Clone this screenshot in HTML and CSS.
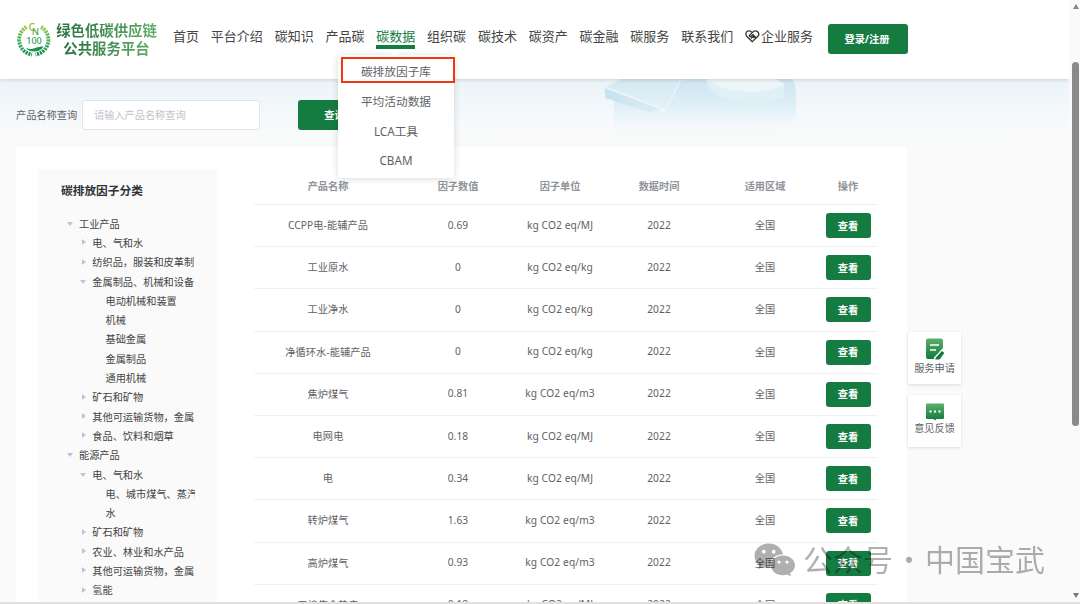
FILE: index.html
```html
<!DOCTYPE html>
<html lang="zh-CN">
<head>
  <meta charset="UTF-8">
  <meta name="viewport" content="width=device-width, initial-scale=1.0">
  <title>绿色低碳供应链公共服务平台</title>
  <link rel="stylesheet" href="styles.css">
</head>
<body>
<div class="window">
  <div class="page">
    <header>
      <svg class="logo" viewBox="0 0 35 36">
        <defs>
          <linearGradient id="leaf" x1="0" y1="0" x2="0" y2="1">
            <stop offset="0" stop-color="#9acb4b"/>
            <stop offset=".4" stop-color="#4db35c"/>
            <stop offset="1" stop-color="#179150"/>
          </linearGradient>
        </defs>
        <g fill="none" stroke="url(#leaf)">
          <path d="M10.500 6A14.800 14.800 0 0 0 16 33.500" stroke-width="3.800" stroke-dasharray="2.100 .9"/>
          <path d="M25 6A14.800 14.800 0 0 1 19.500 33.500" stroke-width="3.800" stroke-dasharray="2.100 .9"/>
        </g>
        <path d="M14.500 28c4 0 6-2.500 13-2.500-2 3.500-5 5-9 5-3.500 0-7-1-8.500-4 1.500 1 3 1.500 4.500 1.500z" fill="#199353"/>
        <text x="12.500" y="9.500" class="logo-c">C</text>
        <text x="15.800" y="13.800" class="logo-n">N</text>
        <text x="18" y="22.500" class="logo-num">100</text>
      </svg>
      <div class="brand"><span>绿色低碳供应链</span><span>公共服务平台</span></div>
      <nav>
        <a>首页</a>
        <a>平台介绍</a>
        <a>碳知识</a>
        <a>产品碳</a>
        <a class="active">碳数据</a>
        <a>组织碳</a>
        <a>碳技术</a>
        <a>碳资产</a>
        <a>碳金融</a>
        <a>碳服务</a>
        <a>联系我们</a>
        <a class="company"><svg viewBox="0 0 15 13"><path d="M7.300 11.700 1.700 6.200C.2 4.500.8 1.900 2.700 1.200 4.400.6 6 1 7.300 2.600 8.700 1 10.500.6 12 1.300c2 .9 2.400 3.400.9 5L7.300 11.700zM7.300 2.600 4.600 5.200c-.6.800.4 1.900 1.300 1.200L8 4.700l3 3M5.800 8.500l2.300-1.800 1.300 1.300"/></svg>企业服务</a>
      </nav>
      <button class="login">登录/注册</button>
      <div class="submenu">
        <a class="marked">碳排放因子库</a>
        <a>平均活动数据</a>
        <a>LCA工具</a>
        <a>CBAM</a>
      </div>
    </header>

    <section class="banner">
      <svg class="banner-art" viewBox="0 0 200 62">
        <defs>
          <linearGradient id="ice" x1="0" y1="0" x2="0" y2="1">
            <stop offset="0" stop-color="#cfe5f1"/>
            <stop offset=".45" stop-color="#deeef6"/>
            <stop offset=".8" stop-color="#f2f8fb"/>
            <stop offset="1" stop-color="#f8fafb" stop-opacity="0"/>
          </linearGradient>
          <linearGradient id="side" x1="0" y1="0" x2="1" y2="0">
            <stop offset="0" stop-color="#c6e1ef"/>
            <stop offset="1" stop-color="#deeef6"/>
          </linearGradient>
          <linearGradient id="plate" x1="0" y1="0" x2="0" y2="1">
            <stop offset="0" stop-color="#d3e8f3"/>
            <stop offset="1" stop-color="#e6f2f8"/>
          </linearGradient>
        </defs>
        <path d="M14 18 65 33 80 0H192q4 6 4 14V36Q190 50 165 56H14z" fill="url(#ice)"/>
        <path d="M5 8 22 0H81L66 31z" fill="url(#plate)"/>
        <path d="M5 8 66 31 81 0" fill="none" stroke="#f1f8fb"/>
        <path d="M5 9 62 30.500 50 33 5 19z" fill="url(#side)"/>
        <path d="M106 0v3c5 13 25 21 47 21 12 0 22-2 31-6V5l-8-5z" fill="#e0f0f7"/>
        <path d="M107 0c8 8 24 13 46 13 12 0 23-3 31-8l-8-5z" fill="#edf5f9"/>
      </svg>
      <label>产品名称查询</label>
      <input type="text" placeholder="请输入产品名称查询">
      <button class="search">查询</button>
    </section>

    <main>
      <aside>
        <h2>碳排放因子分类</h2>
        <ul class="tree">
          <li class="open">工业产品</li>
          <li class="l2 shut">电、气和水</li>
          <li class="l2 shut">纺织品，服装和皮革制</li>
          <li class="l2 open">金属制品、机械和设备</li>
          <li class="l3">电动机械和装置</li>
          <li class="l3">机械</li>
          <li class="l3">基础金属</li>
          <li class="l3">金属制品</li>
          <li class="l3">通用机械</li>
          <li class="l2 shut">矿石和矿物</li>
          <li class="l2 shut">其他可运输货物，金属</li>
          <li class="l2 shut">食品、饮料和烟草</li>
          <li class="open">能源产品</li>
          <li class="l2 open">电、气和水</li>
          <li class="l3">电、城市煤气、蒸汽</li>
          <li class="l3">水</li>
          <li class="l2 shut">矿石和矿物</li>
          <li class="l2 shut">农业、林业和水产品</li>
          <li class="l2 shut">其他可运输货物，金属</li>
          <li class="l2 shut">氢能</li>
        </ul>
      </aside>
      <table>
        <colgroup><col class="c1"><col class="c2"><col class="c3"><col class="c4"><col class="c5"><col class="c6"></colgroup>
        <thead>
          <tr><th>产品名称</th><th>因子数值</th><th>因子单位</th><th>数据时间</th><th>适用区域</th><th>操作</th></tr>
        </thead>
        <tbody>
          <tr><td>CCPP电-能辅产品</td><td>0.69</td><td>kg CO2 eq/MJ</td><td>2022</td><td>全国</td><td><button>查看</button></td></tr>
          <tr><td>工业原水</td><td>0</td><td>kg CO2 eq/kg</td><td>2022</td><td>全国</td><td><button>查看</button></td></tr>
          <tr><td>工业净水</td><td>0</td><td>kg CO2 eq/kg</td><td>2022</td><td>全国</td><td><button>查看</button></td></tr>
          <tr><td>净循环水-能辅产品</td><td>0</td><td>kg CO2 eq/kg</td><td>2022</td><td>全国</td><td><button>查看</button></td></tr>
          <tr><td>焦炉煤气</td><td>0.81</td><td>kg CO2 eq/m3</td><td>2022</td><td>全国</td><td><button>查看</button></td></tr>
          <tr><td>电网电</td><td>0.18</td><td>kg CO2 eq/MJ</td><td>2022</td><td>全国</td><td><button>查看</button></td></tr>
          <tr><td>电</td><td>0.34</td><td>kg CO2 eq/MJ</td><td>2022</td><td>全国</td><td><button>查看</button></td></tr>
          <tr><td>转炉煤气</td><td>1.63</td><td>kg CO2 eq/m3</td><td>2022</td><td>全国</td><td><button>查看</button></td></tr>
          <tr><td>高炉煤气</td><td>0.93</td><td>kg CO2 eq/m3</td><td>2022</td><td>全国</td><td><button>查看</button></td></tr>
          <tr><td>干熄焦余热电</td><td>0.18</td><td>kg CO2 eq/MJ</td><td>2022</td><td>全国</td><td><button>查看</button></td></tr>
        </tbody>
      </table>
    </main>

    <div class="float-tools">
      <div class="tool">
        <svg viewBox="0 0 20 22">
          <defs>
            <linearGradient id="green" x1="0" y1="0" x2="0" y2="1">
              <stop offset="0" stop-color="#5cb06a"/>
              <stop offset="1" stop-color="#107a3d"/>
            </linearGradient>
          </defs>
          <path d="M3 .5h13a2 2 0 0 1 2 2V10L9 21H3a2 2 0 0 1-2-2V2.500a2 2 0 0 1 2-2z" fill="url(#green)"/>
          <path d="M5 7h9M5 12h6" stroke="#fff" stroke-width="1.300"/>
          <path d="m10.500 19 6-6.500 2.800 2.500-4.800 6.500h-4z" fill="#107a3d"/>
          <path d="m9 20.500 9-9.500" stroke="#fff" stroke-width="1.200"/>
        </svg>
        <span>服务申请</span>
      </div>
      <div class="tool feedback">
        <svg viewBox="0 0 20 18">
          <path d="M2 .5h16a1 1 0 0 1 1 1V15a1 1 0 0 1-1 1h-6.500L10 17.500 8.500 16H2a1 1 0 0 1-1-1V1.500a1 1 0 0 1 1-1z" fill="url(#green)"/>
          <path d="M4.500 8.500h2M9 8.500h2M13.500 8.500h2" stroke="#fff" stroke-width="2"/>
        </svg>
        <span>意见反馈</span>
      </div>
    </div>
  </div>
  <div class="scrollbar"><i class="up"></i><i class="thumb"></i><i class="down"></i></div>
</div>

<div class="watermark">
  <svg viewBox="0 0 42 34">
    <path fill-rule="evenodd" d="M15 .5C7 .5.500 6 .500 12.700c0 4 2 7.100 5.200 9.300L4.300 26.200l5-2.500c2.300.7 4.700 1 7.200.9C14.500 17 21 11.200 29 11.600 27.800 5 22 .5 15 .5zM9.800 6.800a1.900 1.900 0 1 0 0 3.800 1.900 1.900 0 0 0 0-3.800zm9.900 0a1.900 1.900 0 1 0 0 3.800 1.900 1.900 0 0 0 0-3.800z"/>
    <path fill-rule="evenodd" d="M29 12.500c-6.800 0-12 4.400-12 9.900s5.200 9.800 12 9.800c1.500 0 2.900-.2 4.200-.7l3.900 2.100-1.100-3.500c3-1.900 5-4.500 5-7.700 0-5.500-5.200-9.900-12-9.900zm-4 5a1.600 1.600 0 1 0 0 3.200 1.600 1.600 0 0 0 0-3.200zm8 0a1.600 1.600 0 1 0 0 3.200 1.600 1.600 0 0 0 0-3.200z"/>
  </svg>
  <span>公众号</span><b>·</b><span>中国宝武</span>
</div>
</body>
</html>
```

FILE: styles.css
```css
* { box-sizing: border-box; }
body { margin: 0; height: 604px; overflow: hidden; position: relative; background: #fafafa; font-family: "Noto Sans", "Noto Sans CJK SC", sans-serif; font-size: 10.2px; color: #606266; }
button { border: none; border-radius: 3px; background: #157c41; color: #fff; font-family: inherit; font-weight: bold; font-size: 10.2px; padding: 0 0 1px; }

.window { display: flex; height: 604px; border-bottom: 2px solid #e0e0e0; overflow: hidden; }
.page { width: 1069px; height: 602px; overflow: hidden; position: relative; }

header { display: flex; align-items: flex-start; height: 79px; padding-left: 16px; background: #fff; position: relative; z-index: 2; box-shadow: 0 1px 4px rgba(0, 0, 0, 0.14); }
.logo { width: 35px; height: 36px; margin-top: 21px; overflow: visible; }
.logo text { font-family: "Noto Sans", sans-serif; font-weight: 500; }
.logo-c { font-size: 10.5px; fill: #8fc43f; }
.logo-n { font-size: 9.5px; fill: #4fae4a; }
.logo-num { font-size: 9px; fill: #2f9f55; text-anchor: middle; }
.brand { display: flex; flex-direction: column; align-items: center; width: 101px; margin: 21px 0 0 5px; font-family: "Noto Sans CJK SC", sans-serif; font-size: 14.4px; font-weight: bold; line-height: 18px; white-space: nowrap; }
.brand span { background: linear-gradient(90deg, #28713f, #5fab68); -webkit-background-clip: text; background-clip: text; color: transparent; }
nav { display: flex; gap: 11.8px; margin: 26px 0 0 16px; font-size: 13px; color: #444; white-space: nowrap; }
nav a { height: 23px; line-height: 20px; }
nav .active { color: #157c41; border-bottom: 4px solid #157c41; }
.company { display: flex; }
.company svg { width: 15px; height: 13px; margin: 4px 1px 0 0; fill: none; stroke: #333; stroke-width: 1.3; }
.login { width: 80px; height: 30px; margin: 24px 0 0 15px; padding-right: 2px; }

.submenu { position: absolute; left: 338px; top: 55px; width: 116px; height: 123px; padding-top: 2px; background: #fff; border-radius: 3px; box-shadow: 0 1px 7px rgba(0, 0, 0, 0.15); font-size: 11.7px; }
.submenu::before { content: ""; position: absolute; left: 53px; top: -4px; border: 4px solid transparent; border-top: none; border-bottom-color: #fff; }
.submenu a { display: block; height: 29.7px; line-height: 29px; text-align: center; }
.submenu .marked { width: 114px; height: 26px; margin: 0 0 3.900px 3px; line-height: 25px; padding-right: 4px; border: 2px solid #f53410; }

.banner { display: flex; align-items: flex-start; height: 68px; padding: 21px 0 0 16px; position: relative; background: linear-gradient(#ebf4f9, #f6f9fb 60%, #fafafa); }
.banner-art { position: absolute; left: 600px; top: 0; width: 200px; height: 62px; }
.banner label { width: 66px; line-height: 30px; white-space: nowrap; }
.banner input { width: 178px; height: 30px; padding: 0 11px; border: 1px solid #e1e5ea; border-radius: 3px; background: #fff; font-family: inherit; font-size: 10.2px; }
.banner input::placeholder { color: #bfc3cb; }
.search { width: 73px; height: 30px; margin-left: 38px; }

main { display: flex; align-items: flex-start; width: 891px; height: 500px; margin-left: 16px; padding: 22px 0 0 22px; background: #fff; }
aside { width: 179px; height: 478px; background: #fafafa; }
aside h2 { margin: 0; padding: 11px 0 0 23px; font-size: 11.7px; line-height: 20px; color: #303133; }
.tree { width: 157px; margin: 13.5px 0 0; padding: 0 0 0 29px; list-style: none; overflow: hidden; color: #444; }
.tree li { display: flex; align-items: center; height: 19.3px; padding-left: 12px; white-space: nowrap; position: relative; }
.tree .l2 { padding-left: 25.300px; }
.tree .l3 { padding-left: 38.500px; }
.tree li::before { position: absolute; margin-left: -12px; border: 3px solid transparent; }
.tree .open::before { content: ""; margin-top: 4px; border-top-color: #c0c4cc; border-top-width: 4px; }
.tree .shut::before { content: ""; margin-left: -10px; border-left-color: #c0c4cc; border-left-width: 4px; }

table { width: 624px; margin-left: 37px; table-layout: fixed; border-collapse: separate; border-spacing: 0; text-align: center; }
.c1 { width: 148px; }
.c2 { width: 112px; }
.c3 { width: 92px; }
.c4, .c5 { width: 106px; }
.c6 { width: 60px; }
th, td { padding: 0 0 2px; border-bottom: 1px solid #eff1f5; white-space: nowrap; }
th { height: 36px; color: #909399; }
td { height: 42.2px; letter-spacing: 0.1px; }
td:last-child { padding: 0; }
td button { width: 45px; height: 25px; display: block; margin: 0 auto; }

.float-tools { position: absolute; left: 908px; top: 332px; display: flex; flex-direction: column; gap: 11px; }
.tool { display: flex; flex-direction: column; align-items: center; width: 53px; height: 52px; padding-top: 6px; background: #fff; box-shadow: 0 1px 3px rgba(0, 0, 0, 0.13); line-height: 16px; }
.tool svg { width: 20px; height: 22px; }
.tool.feedback { padding-top: 8px; }
.feedback svg { height: 18px; }
.feedback span { margin-top: -1px; }

.scrollbar { display: flex; flex-direction: column; align-items: center; width: 11px; height: 602px; padding: 4px 0 0 2px; background: #fafafa; }
.scrollbar .up { border: 3.5px solid transparent; border-top: none; border-bottom: 5px solid #858585; }
.scrollbar .thumb { width: 7px; height: 364px; margin-top: 53px; border-radius: 4px; background: #8a8a8a; }
.scrollbar .down { margin-top: 167px; border: 3.5px solid transparent; border-bottom: none; border-top: 5px solid #777; }

.watermark { position: absolute; left: 754px; top: 538px; z-index: 5; display: flex; align-items: center; height: 44px; opacity: 0.31; color: #000; font-family: "Noto Sans CJK SC", sans-serif; font-size: 30px; font-weight: 400; white-space: nowrap; }
.watermark svg { width: 42px; height: 34px; margin-right: 7px; }
.watermark span { margin-top: -4px; }
.watermark b { width: 32px; margin-top: -4px; font-weight: 400; text-align: center; }
```
